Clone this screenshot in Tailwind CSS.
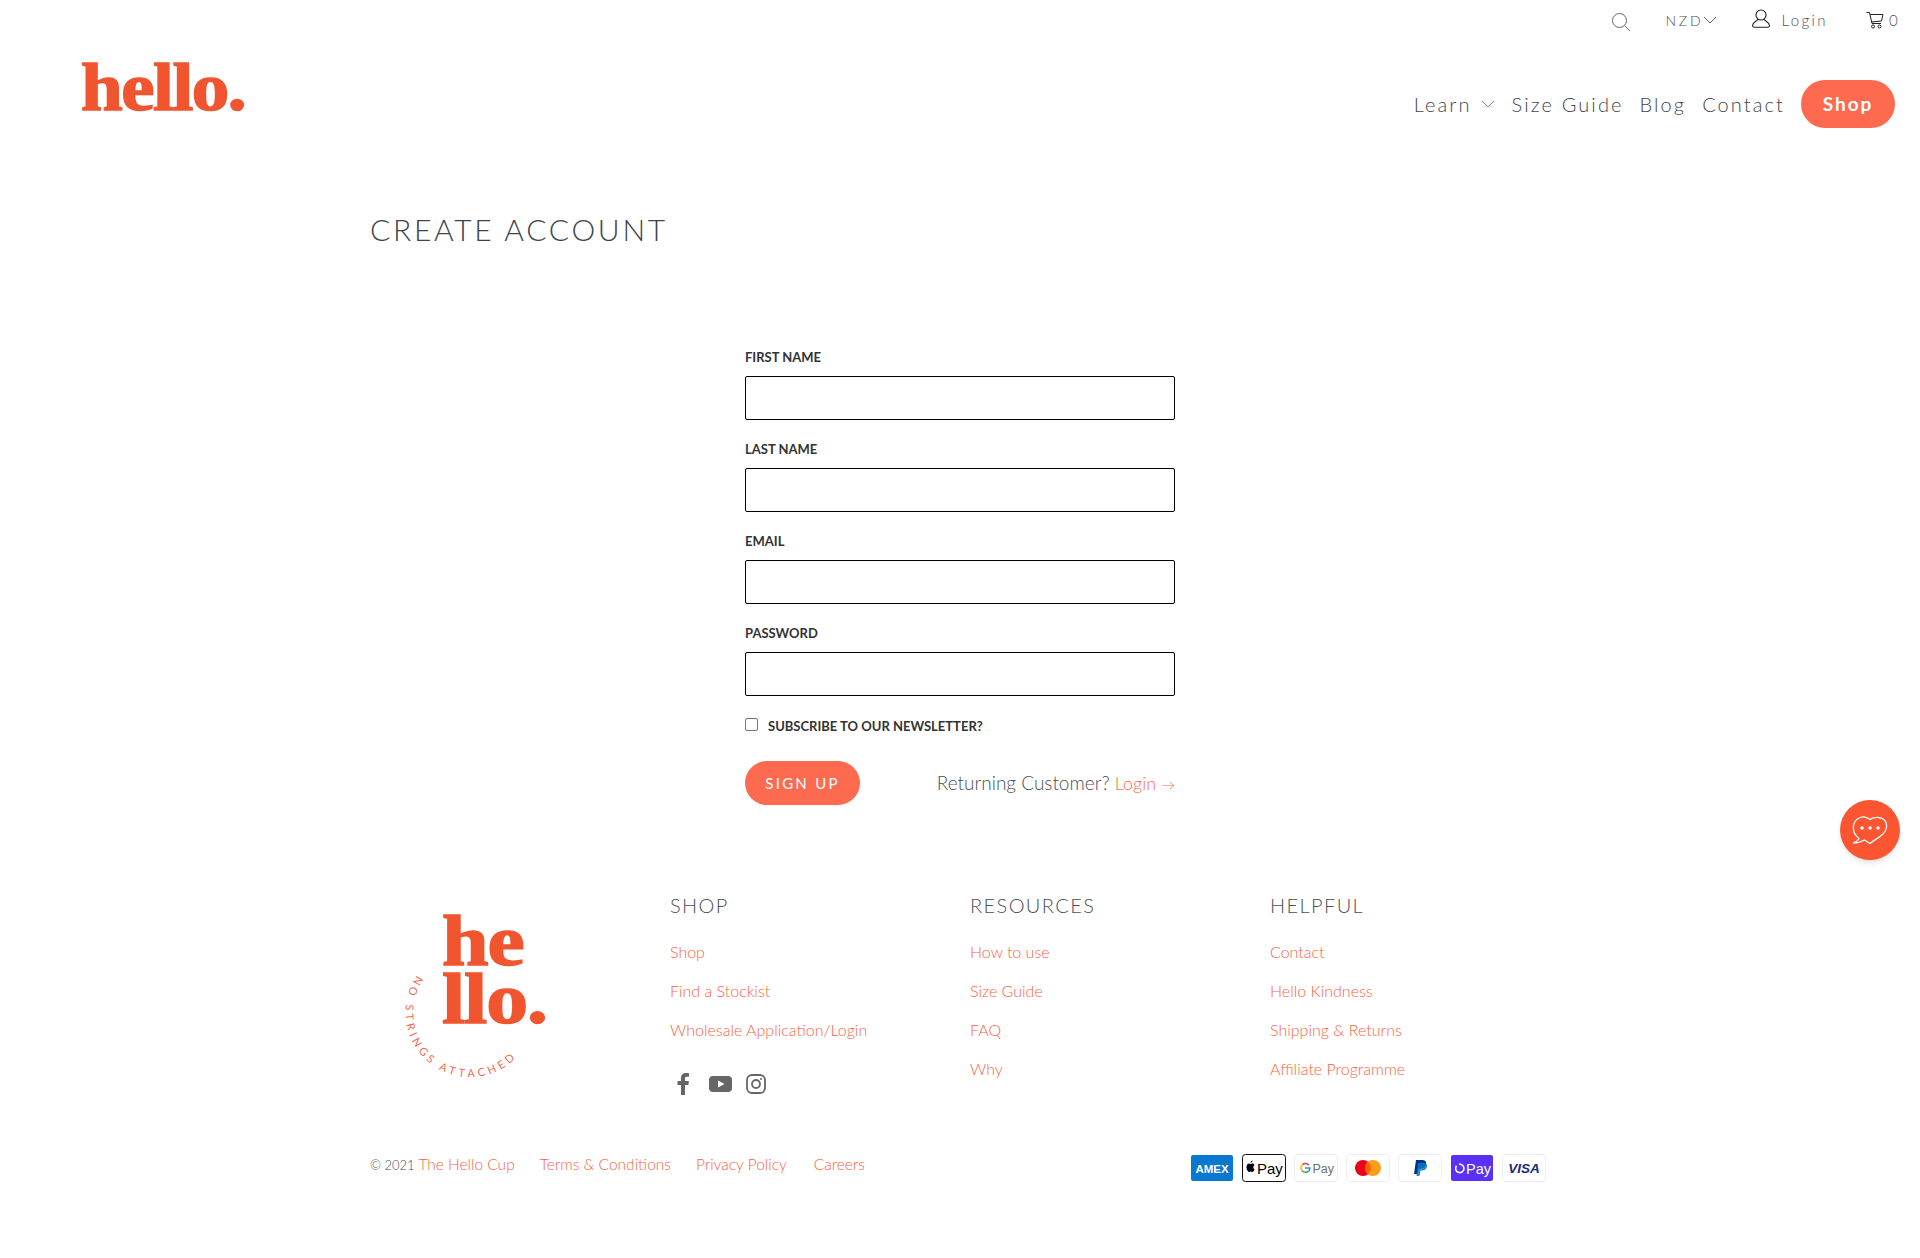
<!DOCTYPE html>
<html lang="en">
<head>
    <meta charset="UTF-8">
    <title>Create Account - The Hello Cup</title>
    <script src="https://cdn.jsdelivr.net/npm/@tailwindcss/browser@4"></script>
</head>
<body class="min-h-screen bg-white font-['Lato',sans-serif] font-light text-[#4a4f55]">
    <!-- Header -->
    <header class="h-[160px]">
        <div class="flex justify-end items-center h-[40px] pr-[20px] text-[15px] tracking-[0.16em]">
            <svg class="w-[20px] h-[20px] mr-[34px] mt-[3px]" viewBox="0 0 20 20" fill="none" stroke="#5c6670" stroke-width="1"><circle cx="8.5" cy="8.5" r="7"/><path d="M13.5 13.5l5.500 5.500"/></svg>
            <span class="text-[14px] tracking-[0.2em]">NZD</span>
            <svg class="w-[14px] h-[8px] mr-[34px]" viewBox="0 0 14 8" fill="none" stroke="#5c6670"><path d="M1 1l6 6 6-6"/></svg>
            <svg class="w-[20px] h-[20px] mr-[10px] -mt-[3px]" viewBox="0 0 20 20" fill="none" stroke="#222" stroke-width="1.1"><circle cx="10" cy="6" r="5"/><path d="M7 10c0 2-5.500 3-5.500 6.500 0 1.500 1 1.800 2 1.800h13c1 0 2-.3 2-1.800C18.500 13 13 12 13 10"/></svg>
            <span class="mr-[38px]">Login</span>
            <svg class="w-[18px] h-[18px] mr-[5px]" viewBox="0 0 18 18" fill="none" stroke="#222" stroke-width="1"><path d="M.5 1.500h3l2.500 11h9M4 3.500h13l-1.500 6.500-10 1"/><circle cx="7" cy="15.500" r="1.500"/><circle cx="13.500" cy="15.500" r="1.500"/></svg>
            <span>0</span>
        </div>
        <div class="flex items-center h-[60px] mt-[34px] pl-[81px] pr-[25px]">
            <span class="font-['Liberation_Serif',serif] font-bold text-[#f15530] text-[67px] leading-none tracking-[-0.02em] -mt-[34px] origin-left scale-x-[1.12] [-webkit-text-stroke:1.5px_#f15530]">hello.</span>
            <nav class="ml-auto flex items-center text-[20px] tracking-[0.105em] text-[#3f464d]">
                <span>Learn</span>
                <svg class="w-[14px] h-[8px] ml-[9px] mr-[17px]" viewBox="0 0 14 8" fill="none" stroke="#8a9097"><path d="M1 1l6 6 6-6"/></svg>
                <span class="mr-[16px]">Size Guide</span>
                <span class="mr-[16px]">Blog</span>
                <span class="mr-[16px]">Contact</span>
                <span class="flex items-center justify-center w-[94px] h-[48px] rounded-full bg-[#fe6a4f] text-white font-bold text-[19px] tracking-[0.1em]">Shop</span>
            </nav>
        </div>
    </header>

    <main class="w-[1180px] ml-[370px]">
        <h1 class="text-[30px] leading-[40px] tracking-[0.09em] text-[#3d444b] font-light mt-[49px]">CREATE ACCOUNT</h1>

        <form class="w-[430px] ml-[375px] mt-[100px]">
            <label class="block text-[13px] leading-[16px] font-bold text-[#333]">FIRST NAME</label>
            <input type="text" class="block w-full h-[44px] mt-[11px] mb-[21px] border border-black rounded-[2px]">
            <label class="block text-[13px] leading-[16px] font-bold text-[#333]">LAST NAME</label>
            <input type="text" class="block w-full h-[44px] mt-[11px] mb-[21px] border border-black rounded-[2px]">
            <label class="block text-[13px] leading-[16px] font-bold text-[#333]">EMAIL</label>
            <input type="email" class="block w-full h-[44px] mt-[11px] mb-[21px] border border-black rounded-[2px]">
            <label class="block text-[13px] leading-[16px] font-bold text-[#333]">PASSWORD</label>
            <input type="password" class="block w-full h-[44px] mt-[11px] mb-[19px] border border-black rounded-[2px]">
            <div class="flex items-center h-[18px]">
                <span class="w-[13px] h-[13px] border border-[#767676] rounded-[2px] bg-white"></span>
                <span class="ml-[10px] text-[13px] font-bold text-[#333] mt-[5px]">SUBSCRIBE TO OUR NEWSLETTER?</span>
            </div>
            <div class="flex items-center justify-between mt-[28px]">
                <button type="button" class="w-[115px] h-[44px] rounded-full bg-[#fe6a4f] text-white text-[15px] font-normal tracking-[0.15em]">SIGN UP</button>
                <span class="text-[19px] text-[#4a4f55]">Returning Customer? <a class="text-[18px] text-[#fe6a4f]">Login <span class="text-[14px]">→</span></a></span>
            </div>
        </form>

        <!-- Footer -->
        <footer class="mt-[88px]">
            <div class="grid grid-cols-[300px_300px_300px_280px] h-[251px]">
                <div>
                    <svg class="w-[160px] h-[190px] ml-[28px]" viewBox="0 0 160 190">
                        <g font-family="Liberation Serif" font-weight="bold" font-size="71" fill="#f15530" stroke="#f15530" stroke-width="1.500" letter-spacing="-1">
                            <text transform="translate(44 71.500) scale(1.18 1)">he</text>
                            <text transform="translate(44 129.500) scale(1.18 1)">llo.</text>
                        </g>
                        <defs><path id="ring" d="M19 82.500A60 60 0 1 0 125 156.500"/></defs>
                        <text font-family="Lato" font-weight="400" font-size="11" fill="#f4694c" letter-spacing="3.700"><textPath href="#ring">NO STRINGS ATTACHED</textPath></text>
                    </svg>
                </div>
                <div>
                    <h4 class="text-[20px] leading-[24px] tracking-[0.07em] font-light">SHOP</h4>
                    <ul class="mt-[15px] text-[16px] leading-[39px] text-[#fb5f42]">
                        <li>Shop</li>
                        <li>Find a Stockist</li>
                        <li>Wholesale Application/Login</li>
                    </ul>
                    <div class="flex items-center mt-[24px] ml-[7px]">
                        <svg class="w-[13px] h-[22px] mr-[19px]" viewBox="0 0 13 22" fill="#666"><path d="M4 22V12H.5V8H4V5c0-3.200 2-5 4.800-5 1.400 0 2.700.1 3.200.2v3.500h-2.200c-1.500 0-1.800.8-1.800 1.800V8h3.900l-.5 4H8v10z"/></svg>
                        <svg class="w-[23px] h-[16px] mr-[14px]" viewBox="0 0 23 16"><rect width="23" height="16" rx="4" fill="#666"/><path d="M9 4.500l6.500 3.500L9 11.500z" fill="#fff"/></svg>
                        <svg class="w-[20px] h-[20px]" viewBox="0 0 20 20" fill="none" stroke="#666" stroke-width="1.800"><rect x="1" y="1" width="18" height="18" rx="5"/><circle cx="10" cy="10" r="4"/><circle cx="15" cy="5" r="1" fill="#666" stroke="none"/></svg>
                    </div>
                </div>
                <div>
                    <h4 class="text-[20px] leading-[24px] tracking-[0.07em] font-light">RESOURCES</h4>
                    <ul class="mt-[15px] text-[16px] leading-[39px] text-[#fb5f42]">
                        <li>How to use</li>
                        <li>Size Guide</li>
                        <li>FAQ</li>
                        <li>Why</li>
                    </ul>
                </div>
                <div>
                    <h4 class="text-[20px] leading-[24px] tracking-[0.07em] font-light">HELPFUL</h4>
                    <ul class="mt-[15px] text-[16px] leading-[39px] text-[#fb5f42]">
                        <li>Contact</li>
                        <li>Hello Kindness</li>
                        <li>Shipping &amp; Returns</li>
                        <li>Affiliate Programme</li>
                    </ul>
                </div>
            </div>
            <div class="flex items-center mt-[4px] text-[15.5px] w-[1176px]">
                <span><span class="text-[13px]">© 2021</span> <a class="text-[#fb5f42]">The Hello Cup</a></span>
                <a class="text-[#fb5f42] ml-[25px]">Terms &amp; Conditions</a>
                <a class="text-[#fb5f42] ml-[25px]">Privacy Policy</a>
                <a class="text-[#fb5f42] ml-[27px]">Careers</a>
                <div class="ml-auto flex gap-[8px] mt-[6px]">
                    <svg class="w-[44px] h-[28px]" viewBox="0 0 44 28"><rect x="1" y="1" width="42" height="26" rx="2" fill="#0a77d0"/><text x="22" y="18.500" text-anchor="middle" font-family="Liberation Sans" font-weight="bold" font-size="11.500" fill="#fff">AMEX</text></svg>
                    <svg class="w-[44px] h-[28px]" viewBox="0 0 44 28"><rect x=".5" y=".5" width="43" height="27" rx="3" fill="#fff" stroke="#111"/><path d="M10.500 9.500c-.7 0-1.200.4-1.800.4s-1-.4-1.700-.4C5.800 9.500 4.500 10.700 4.500 13c0 2.400 1.500 5 2.700 5 .6 0 .9-.4 1.500-.4s.9.400 1.500.4c1 0 1.900-1.500 2.300-2.800-1.500-.7-1.700-3.300 0-4.300-.5-.9-1.200-1.400-2-1.400zM10.400 6.500c-1 .1-1.900 1-1.800 2.300 1 .1 1.900-1 1.800-2.300z" fill="#000"/><text x="15" y="19.500" font-family="Liberation Sans" font-size="15" fill="#000">Pay</text></svg>
                    <svg class="w-[44px] h-[28px]" viewBox="0 0 44 28"><rect x=".5" y=".5" width="43" height="27" rx="3" fill="#fff" stroke="#eee"/><g fill="none" stroke-width="1.600"><path d="M14.800 11.200a4.500 4.500 0 0 0-6.300-.5" stroke="#ea4335"/><path d="M8.500 10.700a4.500 4.500 0 0 0-.3 6" stroke="#fbbc05"/><path d="M8.200 16.700a4.500 4.500 0 0 0 6.500.4" stroke="#34a853"/><path d="M14.700 17.100c.8-.8 1.200-1.800 1.100-3.100h-4.800" stroke="#4285f4"/></g><text x="18.500" y="18.500" font-family="Liberation Sans" font-size="12.500" fill="#6b6f73">Pay</text></svg>
                    <svg class="w-[44px] h-[28px]" viewBox="0 0 44 28"><rect x=".5" y=".5" width="43" height="27" rx="3" fill="#fff" stroke="#eee"/><circle cx="17" cy="14" r="8" fill="#eb001b"/><circle cx="27" cy="14" r="8" fill="#f79e1b"/><path d="M22 7.800a8 8 0 0 1 0 12.400 8 8 0 0 1 0-12.400z" fill="#ff5f00"/></svg>
                    <svg class="w-[44px] h-[28px]" viewBox="0 0 44 28"><rect x=".5" y=".5" width="43" height="27" rx="3" fill="#fff" stroke="#eee"/><path d="M18 6h6c3 0 4.500 1.500 4 4-.5 3-2.500 4.500-5.500 4.500h-2L19.500 20H16z" fill="#003087"/><path d="M20 9h6c2.500 0 3.500 1.500 3 3.500-.5 2.500-2 4-5 4h-1.500L21.500 22H18.500z" fill="#0079c1" opacity=".85"/></svg>
                    <svg class="w-[44px] h-[28px]" viewBox="0 0 44 28"><rect x="1" y="1" width="42" height="26" rx="2" fill="#5a31f4"/><path d="M9 10.300a4.200 4.200 0 1 1-2.500 1.500M6.500 14" fill="none" stroke="#fff" stroke-width="1.600"/><text x="16" y="19.500" font-family="Liberation Sans" font-size="14.500" fill="#fff">Pay</text></svg>
                    <svg class="w-[44px] h-[28px]" viewBox="0 0 44 28"><rect x=".5" y=".5" width="43" height="27" rx="3" fill="#fff" stroke="#eee"/><text x="22" y="19" text-anchor="middle" font-family="Liberation Sans" font-weight="bold" font-style="italic" font-size="13.500" fill="#1a2a7a">VISA</text></svg>
                </div>
            </div>
        </footer>
    </main>

    <!-- Chat widget -->
    <div class="fixed left-[1840px] top-[800px] w-[60px] h-[60px] rounded-full bg-[#fb5531] shadow-md flex items-center justify-center">
        <svg class="w-[36px] h-[32px] mt-[2px]" viewBox="0 0 36 32" fill="none" stroke="#fff" stroke-width="1.300"><path d="M18 4.500C22 1.500 29 1.500 32.500 5c3.500 4 2.500 10-1.500 14-4 4-9 6-13 9.500-2-1-4-2.500-5.500-3.500-3 1.800-7 3-11.500 3 3-.5 4.500-2 6-4.500C2.500 20 .8 15 1.500 10.500 2.500 4 9 1 13 2.200c2 .6 3.500 1.300 5 2.300z"/><circle cx="10" cy="13" r="1.800" fill="#fff" stroke="none"/><circle cx="18" cy="13" r="1.800" fill="#fff" stroke="none"/><circle cx="26" cy="13" r="1.800" fill="#fff" stroke="none"/></svg>
    </div>
</body>
</html>
